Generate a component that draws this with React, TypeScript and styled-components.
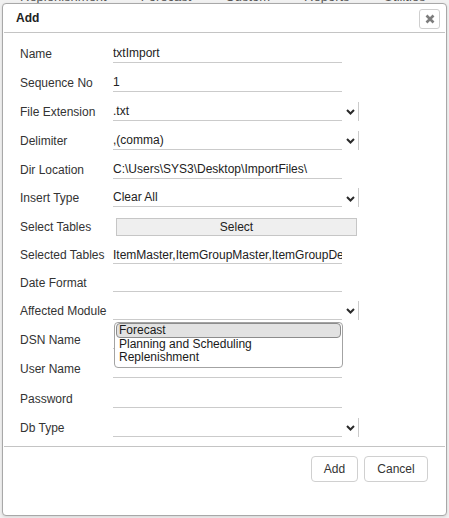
import styled, { createGlobalStyle } from 'styled-components';

const GlobalStyle = createGlobalStyle`
  body {
    margin: 0;
    background: #f1f1f1;
    font-family: 'Liberation Sans', Arial, sans-serif;
  }
`;

const Page = styled.div`
  position: relative;
  width: 449px;
  height: 518px;
  overflow: hidden;
`;

const Toolbar = styled.div`
  display: flex;
  gap: 34px;
  margin-top: -11px;
  padding-left: 20px;
  height: 14px;
  font-size: 13px;
  color: #555;
  white-space: nowrap;
`;

const Dialog = styled.div`
  position: absolute;
  left: 2px;
  top: 3px;
  width: 445px;
  height: 513px;
  box-sizing: border-box;
  background: #fff;
  border: 1px solid #a8a8a8;
  border-radius: 4px;
  box-shadow: 0 1px 3px rgba(0, 0, 0, 0.12);
  display: flex;
  flex-direction: column;
`;

const Header = styled.div`
  height: 28px;
  margin: 0 1px;
  padding: 0 5px 0 12px;
  display: flex;
  align-items: center;
  justify-content: space-between;
  border-bottom: 1px solid #c4c4c4;
`;

const Title = styled.span`
  font-size: 12px;
  font-weight: bold;
  color: #222;
`;

const CloseButton = styled.button`
  width: 21px;
  height: 20px;
  padding: 0;
  margin-top: 2px;
  display: flex;
  align-items: center;
  justify-content: center;
  background: #fff;
  border: 1px solid #cfcfcf;
  border-radius: 3px;
`;

const Body = styled.div`
  padding: 6px 0 4px 17px;
`;

const Row = styled.div<{ $h?: number }>`
  display: flex;
  align-items: center;
  height: ${({ $h }) => $h ?? 29}px;
`;

const Label = styled.span`
  width: 93px;
  font-size: 12px;
  color: #333;
  white-space: nowrap;
`;

const TextInput = styled.input`
  width: 229px;
  height: 18px;
  box-sizing: border-box;
  padding: 0;
  margin: 0;
  border: none;
  border-bottom: 1px solid #cbcbcb;
  outline: none;
  background: transparent;
  font-family: 'Liberation Sans', Arial, sans-serif;
  font-size: 12px;
  color: #222;
`;

const SelectWrap = styled.div`
  position: relative;
  display: flex;
  width: 246px;
  height: 18px;
`;

const SelectValue = styled.span`
  width: 229px;
  box-sizing: border-box;
  border-bottom: 1px solid #cbcbcb;
  font-size: 12px;
  line-height: 17px;
  color: #222;
`;

const SelectArrow = styled.span`
  width: 17px;
  height: 19px;
  box-sizing: border-box;
  margin-top: -1px;
  border-right: 1px solid #cbcbcb;
  display: flex;
  align-items: center;
  justify-content: center;
  padding-top: 2px;
`;

const PlainButton = styled.button`
  width: 241px;
  height: 18px;
  margin-left: 3px;
  padding: 0;
  background: #efefef;
  border: 1px solid #c6c6c6;
  font-family: 'Liberation Sans', Arial, sans-serif;
  font-size: 12px;
  color: #222;
`;

const ListBox = styled.div`
  position: absolute;
  z-index: 2;
  top: calc(100% + 2px);
  left: 1px;
  width: 229px;
  box-sizing: border-box;
  padding: 0 1px 3px;
  background: #fff;
  border: 1px solid #a3a3a3;
  border-radius: 4px;
`;

const ListItem = styled.div<{ $active?: boolean }>`
  font-size: 12px;
  line-height: 13px;
  color: #1a1a1a;
  padding-left: 2px;
  border: 1px solid ${({ $active }) => ($active ? '#8c8c8c' : 'transparent')};
  border-width: ${({ $active }) => ($active ? '1px' : '0 1px')};
  border-radius: 4px;
  background: ${({ $active }) => ($active ? '#e2e2e2' : 'transparent')};
`;

const Footer = styled.div`
  margin: 0 1px;
  padding: 9px 17px 0 0;
  border-top: 1px solid #c4c4c4;
  display: flex;
  justify-content: flex-end;
  gap: 6px;
`;

const FooterButton = styled.button<{ $w: number }>`
  width: ${({ $w }) => $w}px;
  height: 26px;
  padding: 0;
  background: #fff;
  border: 1px solid #d0d0d0;
  border-radius: 4px;
  font-family: 'Liberation Sans', Arial, sans-serif;
  font-size: 12px;
  color: #333;
`;

const Chevron = () => (
  <svg width="9" height="6" viewBox="0 0 9 6">
    <path d="M1 1 L4.5 4.5 L8 1" fill="none" stroke="#2a2a2a" strokeWidth="2" />
  </svg>
);

const Select = ({ value, children }: { value?: string; children?: React.ReactNode }) => (
  <SelectWrap>
    <SelectValue>{value}</SelectValue>
    <SelectArrow>
      <Chevron />
    </SelectArrow>
    {children}
  </SelectWrap>
);

export default function App() {
  return (
    <Page>
      <GlobalStyle />
      <Toolbar>
        <span>Replenishment</span>
        <span>Forecast</span>
        <span>Custom</span>
        <span>Reports</span>
        <span>Utilities</span>
        <span>Help</span>
      </Toolbar>
      <Dialog>
        <Header>
          <Title>Add</Title>
          <CloseButton aria-label="close">
            <svg width="10" height="10" viewBox="0 0 10 10">
              <path d="M1.5 1.5 L8.5 8.5 M8.5 1.5 L1.5 8.5" stroke="#7d7d7d" strokeWidth="2.6" />
            </svg>
          </CloseButton>
        </Header>
        <Body>
          <Row>
            <Label>Name</Label>
            <TextInput defaultValue="txtImport" />
          </Row>
          <Row>
            <Label>Sequence No</Label>
            <TextInput defaultValue="1" />
          </Row>
          <Row>
            <Label>File Extension</Label>
            <Select value=".txt" />
          </Row>
          <Row>
            <Label>Delimiter</Label>
            <Select value=",(comma)" />
          </Row>
          <Row>
            <Label>Dir Location</Label>
            <TextInput defaultValue="C:\Users\SYS3\Desktop\ImportFiles\" />
          </Row>
          <Row $h={28}>
            <Label>Insert Type</Label>
            <Select value="Clear All" />
          </Row>
          <Row>
            <Label>Select Tables</Label>
            <PlainButton>Select</PlainButton>
          </Row>
          <Row $h={28}>
            <Label>Selected Tables</Label>
            <TextInput defaultValue="ItemMaster,ItemGroupMaster,ItemGroupDetail" />
          </Row>
          <Row $h={27}>
            <Label>Date Format</Label>
            <TextInput />
          </Row>
          <Row>
            <Label>Affected Module</Label>
            <Select>
              <ListBox>
                <ListItem $active>Forecast</ListItem>
                <ListItem>Planning and Scheduling</ListItem>
                <ListItem>Replenishment</ListItem>
              </ListBox>
            </Select>
          </Row>
          <Row>
            <Label>DSN Name</Label>
            <TextInput />
          </Row>
          <Row $h={30}>
            <Label>User Name</Label>
            <TextInput />
          </Row>
          <Row>
            <Label>Password</Label>
            <TextInput type="password" />
          </Row>
          <Row>
            <Label>Db Type</Label>
            <Select />
          </Row>
        </Body>
        <Footer>
          <FooterButton $w={47}>Add</FooterButton>
          <FooterButton $w={64}>Cancel</FooterButton>
        </Footer>
      </Dialog>
    </Page>
  );
}
